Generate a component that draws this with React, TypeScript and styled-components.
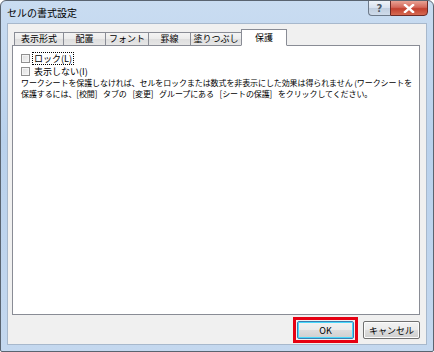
import React from 'react';
import styled, { createGlobalStyle } from 'styled-components';

const GlobalStyle = createGlobalStyle`
  html, body {
    margin: 0;
    padding: 0;
    background: #ffffff;
  }
  body {
    font-family: "Noto Sans CJK JP", "Noto Sans", sans-serif;
    color: #000;
  }
`;

const tabs = [
  { label: '表示形式', w: 50 },
  { label: '配置', w: 43 },
  { label: 'フォント', w: 44 },
  { label: '罫線', w: 43 },
  { label: '塗りつぶし', w: 52 },
  { label: '保護', w: 46, active: true },
];

const App: React.FC = () => {
  return (
    <>
      <GlobalStyle />
      <Window>
        <TitleBar>
          <Title>セルの書式設定</Title>
          <Controls>
            <HelpButton>?</HelpButton>
            <CloseButton>
              <svg width="12" height="9" viewBox="0 0 12 9">
                <path d="M2 1 L10 8 M10 1 L2 8" stroke="#ffffff" strokeWidth="2.4" strokeLinecap="square" />
              </svg>
            </CloseButton>
          </Controls>
        </TitleBar>
        <Client>
          <TabStrip>
            {tabs.map((t) => (
              <Tab key={t.label} $w={t.w} $active={!!t.active}>
                {t.label}
              </Tab>
            ))}
          </TabStrip>
          <Panel>
            <CheckRow>
              <Box />
              <FocusLabel>ロック(L)</FocusLabel>
            </CheckRow>
            <CheckRow>
              <Box />
              <Label>表示しない(I)</Label>
            </CheckRow>
            <Note>
              <Line>ワークシートを保護しなければ、セルをロックまたは数式を非表示にした効果は得られません (ワークシートを</Line>
              <Line $wide>保護するには、[校閲] タブの [変更] グループにある [シートの保護] をクリックしてください。</Line>
            </Note>
          </Panel>
          <ButtonRow>
            <Highlight>
              <Button $default>OK</Button>
            </Highlight>
            <Button>キャンセル</Button>
          </ButtonRow>
        </Client>
      </Window>
    </>
  );
};

const Window = styled.div`
  width: 434px;
  height: 352px;
  box-sizing: border-box;
  border: 1px solid #5a6470;
  border-radius: 6px 6px 2px 2px;
  background: linear-gradient(180deg, #c9dcf1 0%, #b9d1ec 40%, #c4d8ef 100%);
  display: flex;
  flex-direction: column;
  overflow: hidden;
`;

const TitleBar = styled.div`
  height: 22px;
  display: flex;
  align-items: flex-start;
  justify-content: space-between;
  padding-left: 6px;
  padding-right: 5px;
`;

const Title = styled.div`
  font-size: 10px;
  line-height: 12px;
  margin-top: 6px;
  color: #000;
`;

const Controls = styled.div`
  display: flex;
  margin-top: -1px;
`;

const HelpButton = styled.div`
  width: 22px;
  height: 16px;
  box-sizing: border-box;
  border: 1px solid #6d7a8a;
  border-right: none;
  border-radius: 0 0 0 4px;
  background: linear-gradient(180deg, #eef3f9 0%, #d7e1ee 50%, #c0cedf 51%, #cfdbea 100%);
  font-family: "DejaVu Sans", sans-serif;
  font-size: 10px;
  font-weight: bold;
  color: #4c5866;
  display: flex;
  align-items: center;
  justify-content: center;
`;

const CloseButton = styled.div`
  width: 38px;
  height: 16px;
  box-sizing: border-box;
  border: 1px solid #6b2a26;
  border-radius: 0 0 4px 0;
  background: linear-gradient(180deg, #e8a294 0%, #d4685a 45%, #c2402e 55%, #d66a52 100%);
  display: flex;
  align-items: center;
  justify-content: center;
`;

const Client = styled.div`
  flex: 1;
  margin: 0 6px 6px 6px;
  border: 1px solid #a7b8cc;
  background: #f0f0f0;
  display: flex;
  flex-direction: column;
  padding: 5px 6px 1px 4px;
`;

const TabStrip = styled.div`
  display: flex;
  align-items: flex-end;
  padding-left: 2px;
  height: 17px;
  margin-bottom: -1px;
  position: relative;
  z-index: 1;
`;

const Tab = styled.div<{ $w: number; $active: boolean }>`
  width: ${(p) => p.$w}px;
  height: ${(p) => (p.$active ? 17 : 14)}px;
  box-sizing: border-box;
  border: 1px solid #898c95;
  border-bottom: ${(p) => (p.$active ? '1px solid #ffffff' : '1px solid #898c95')};
  margin-right: -1px;
  background: ${(p) =>
    p.$active ? '#ffffff' : 'linear-gradient(180deg, #f4f4f4 0%, #ebebeb 50%, #dedede 51%, #e6e6e6 100%)'};
  font-size: 9px;
  line-height: 12px;
  display: flex;
  align-items: center;
  justify-content: center;
  position: relative;
  z-index: ${(p) => (p.$active ? 2 : 1)};
`;

const Panel = styled.div`
  flex: 1;
  background: #ffffff;
  border: 1px solid #898c95;
  padding: 6px 6px 0 8px;
  display: flex;
  flex-direction: column;
`;

const CheckRow = styled.div`
  display: flex;
  align-items: center;
  gap: 3px;
  height: 13px;
  font-size: 9px;
`;

const Box = styled.div`
  width: 9px;
  height: 9px;
  box-sizing: border-box;
  border: 1px solid #8f8f8f;
  background: linear-gradient(135deg, #dcdcdc 0%, #f6f6f6 100%);
  box-shadow: inset 0 0 0 1px #f4f4f4;
`;

const Label = styled.span`
  line-height: 11px;
  padding: 0 1px;
`;

const FocusLabel = styled(Label)`
  outline: 1px dotted #000;
  outline-offset: 0;
`;

const Note = styled.div`
  margin-top: -1px;
  font-size: 8px;
  line-height: 11px;
  white-space: nowrap;
  letter-spacing: -0.1px;
`;

const Line = styled.div<{ $wide?: boolean }>`
  word-spacing: ${(p) => (p.$wide ? 4 : 0)}px;
`;

const ButtonRow = styled.div`
  display: flex;
  justify-content: flex-end;
  align-items: center;
  gap: 5px;
  padding-top: 2px;
`;

const Highlight = styled.div`
  border: 3px solid #e60012;
  padding: 1px;
`;

const Button = styled.div<{ $default?: boolean }>`
  width: 57px;
  height: 18px;
  box-sizing: border-box;
  border: 1px solid ${(p) => (p.$default ? '#3c7fb1' : '#707070')};
  border-radius: 2px;
  background: linear-gradient(180deg, #f2f2f2 0%, #ebebeb 50%, #dddddd 51%, #cfcfcf 100%);
  box-shadow: inset 0 0 0 1px ${(p) => (p.$default ? '#48d8fb' : '#fcfcfc')};
  font-size: 9px;
  display: flex;
  align-items: center;
  justify-content: center;
`;

export default App;
